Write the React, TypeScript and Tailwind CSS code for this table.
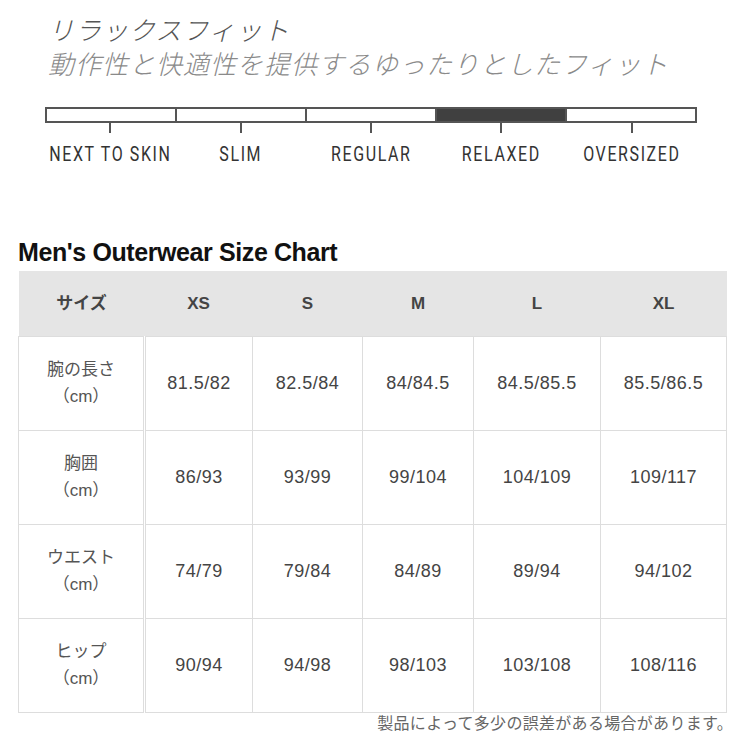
const fits = ["NEXT TO SKIN", "SLIM", "REGULAR", "RELAXED", "OVERSIZED"]
const sizes = ["XS", "S", "M", "L", "XL"]
const colWidths = ["w-[126px]", "w-[108px]", "w-[110px]", "w-[111px]", "w-[127px]", "w-[126px]"]

const rows = [
  { label: "腕の長さ", values: ["81.5/82", "82.5/84", "84/84.5", "84.5/85.5", "85.5/86.5"] },
  { label: "胸囲", values: ["86/93", "93/99", "99/104", "104/109", "109/117"] },
  { label: "ウエスト", values: ["74/79", "79/84", "84/89", "89/94", "94/102"] },
  { label: "ヒップ", values: ["90/94", "94/98", "98/103", "103/108", "108/116"] },
]

function FitScale() {
  return (
    <div className="ml-[45px] w-[652px]">
      <div className="flex h-[16px] border-2 border-[#555]">
        {fits.map((f, i) => (
          <div
            key={f}
            className={`flex-1 ${i > 0 ? "border-l-2 border-[#555]" : ""} ${f === "RELAXED" ? "bg-[#404040]" : "bg-white"}`}
          />
        ))}
      </div>
      <div className="flex">
        {fits.map((f) => (
          <div key={f} className="flex min-w-0 flex-1 flex-col items-center">
            <div className="h-[10px] w-[2px] bg-[#555]" />
            <span className="mt-[11px] whitespace-nowrap text-[20px] leading-[20px] tracking-[0.1em] text-[#333] [font-family:Roboto,sans-serif] scale-x-[0.8]">
              {f}
            </span>
          </div>
        ))}
      </div>
    </div>
  )
}

export default function App() {
  return (
    <div className="relative h-[740px] w-[740px] overflow-hidden bg-white [font-family:'Liberation_Sans','Noto_Sans_CJK_JP',sans-serif]">
      <div className="pl-[48px] pt-[12px] italic font-light [font-family:'Noto_Sans_CJK_JP',sans-serif]">
        <p className="text-[26px] leading-[34px] tracking-[1px] text-[#555]">リラックスフィット</p>
        <p className="text-[26px] leading-[34px] tracking-[1px] text-[#8a8a8a]">
          動作性と快適性を提供するゆったりとしたフィット
        </p>
      </div>

      <div className="mt-[27px]">
        <FitScale />
      </div>

      <h2 className="ml-[18px] mt-[74px] text-[25px] font-bold leading-[28px] tracking-[-0.4px] text-[#111]">
        Men's Outerwear Size Chart
      </h2>

      <table className="ml-[18px] mt-[5px] border-collapse">
        <thead>
          <tr className="h-[65px] bg-[#e5e5e5]">
            <th className={`${colWidths[0]} text-[17px] font-bold text-[#444]`}>サイズ</th>
            {sizes.map((s, i) => (
              <th key={s} className={`${colWidths[i + 1]} text-[17px] font-bold text-[#444]`}>
                {s}
              </th>
            ))}
          </tr>
        </thead>
        <tbody>
          {rows.map((r) => (
            <tr key={r.label} className="h-[94px]">
              <td className="border border-r-[3px] border-[#ddd] border-r-[#ddd] border-double text-center text-[17px] leading-[27px] text-[#555]">
                <div>{r.label}</div>
                <div>（cm）</div>
              </td>
              {r.values.map((v, i) => (
                <td key={i} className="border border-[#ddd] text-center text-[18px] tracking-[0.5px] text-[#444]">
                  {v}
                </td>
              ))}
            </tr>
          ))}
        </tbody>
      </table>

      <p className="absolute right-[7px] top-[711px] text-[16px] leading-[22px] tracking-[0.3px] text-[#666] [font-family:'Noto_Sans_CJK_JP',sans-serif]">
        製品によって多少の誤差がある場合があります。
      </p>
    </div>
  )
}
